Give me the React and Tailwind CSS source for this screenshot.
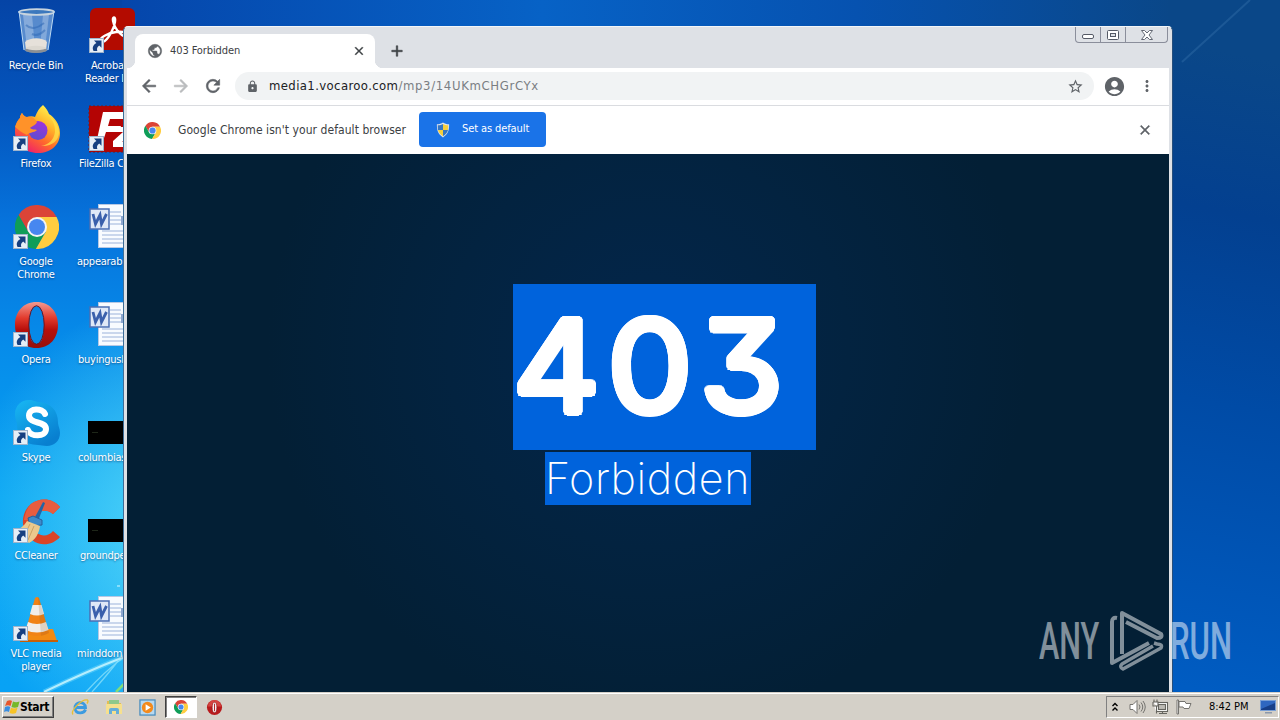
import React from "react";
import { MdPublic, MdLock, MdStarBorder, MdAccountCircle, MdMoreVert, MdArrowBack, MdArrowForward, MdRefresh, MdClose, MdAdd } from "react-icons/md";

// Little arrow badge in the corner of desktop shortcuts
const ShortcutBadge = () => (
  <svg viewBox="0 0 15 15" className="absolute left-[1px] bottom-[2px] w-[15px] h-[15px]">
    <rect x="0.5" y="0.5" width="14" height="14" fill="#e6eef6" stroke="#9fb4cc" />
    <path d="M5 2.500h7.500v7.200l-2.300-2.200C8 9 7.600 10.500 8.300 13H4.600C2.800 9.500 4.200 6.900 7.400 5z" fill="#163f80" />
  </svg>
);

const RecycleBin = () => (
  <svg viewBox="0 0 48 48" className="w-12 h-12">
    <path d="M7 4l5 39c5 4 19 4 24 0l6-39z" fill="#a9cdf0" fillOpacity="0.5" />
    <path d="M11 8l4 33h8L20 8z" fill="#fff" fillOpacity="0.28" />
    <path d="M37 8l-4 33h-5l3-33z" fill="#fff" fillOpacity="0.25" />
    <path d="M14 18c5 5 12 3 18-2M20 27c4 2 9 0 13-4" fill="none" stroke="#2b65b4" strokeWidth="2" opacity="0.5" />
    <path d="M13 35c5-5 18-5 22 0l-1 8c-5 3-15 3-20 0z" fill="#e6e1da" />
    <ellipse cx="24" cy="43" rx="11" ry="3" fill="#8b8f94" />
    <ellipse cx="24" cy="41" rx="10" ry="2.200" fill="#dcd8d0" />
    <ellipse cx="24.500" cy="5" rx="17.500" ry="2.800" fill="#3c78bd" stroke="#c8d4de" strokeWidth="1.800" />
    <path d="M7 4l5 39M42 4l-6 39" stroke="#bcd9f2" strokeWidth="1" />
  </svg>
);

const FirefoxIcon = () => (
  <svg viewBox="0 0 48 48" className="w-12 h-12">
    <defs>
      <linearGradient id="ffBody" x1="0.8" y1="0.05" x2="0.25" y2="0.95">
        <stop offset="0" stopColor="#fff44f" />
        <stop offset="0.35" stopColor="#ffb52a" />
        <stop offset="0.65" stopColor="#ff6a2b" />
        <stop offset="1" stopColor="#f0206a" />
      </linearGradient>
      <linearGradient id="ffGlobe" x1="0.7" y1="0" x2="0.3" y2="1">
        <stop offset="0" stopColor="#a032dc" />
        <stop offset="1" stopColor="#5a4fd0" />
      </linearGradient>
    </defs>
    <path d="M31 0c3 3 5 6 6 9 5 3 11 10 11 19 0 12-9 20-22 20S3 39 3 27c0-7 2-11 5-14 0-2 1-4 2-5 1 2 3 4 5 4 3-1 6-1 8 0 2-5 4-9 8-12z" fill="url(#ffBody)" />
    <circle cx="26" cy="25.500" r="9.500" fill="url(#ffGlobe)" />
    <path d="M3 22c2-6 4-8 5-9 0-2 1-4 2-5 1 2 3 4 5 4 4-1 7 0 10 5-1 3-5 4-7 6 2 2 5 1 7 2-3 3-8 2-10 5-5-2-8-5-12-8z" fill="#ff9229" />
    <path d="M31 1c2 8 13 13 12 26-1 8-7 13-14 14 10 1 18-5 18-14C47 16 35 11 31 1z" fill="#ffe14a" opacity="0.75" />
  </svg>
);

const ChromeLogo = ({ className }) => (
  <svg viewBox="2 2 44 44" className={className}>
    <path d="M24 14H43.600A22 22 0 0 0 5.540 12.030L15.340 29z" fill="#db4437" />
    <path d="M24 14H43.600A22 22 0 0 0 5.540 12.030L15.340 29z" fill="#0f9d58" transform="rotate(-120 24 24)" />
    <path d="M24 14H43.600A22 22 0 0 0 5.540 12.030L15.340 29z" fill="#ffcd40" transform="rotate(120 24 24)" />
    <circle cx="24" cy="24" r="10" fill="#f4f4f4" />
    <circle cx="24" cy="24" r="8" fill="#4787f0" />
  </svg>
);

const OperaIcon = ({ className }) => (
  <svg viewBox="0 0 48 48" className={className}>
    <defs>
      <linearGradient id="opRed" x1="0" y1="0" x2="0" y2="1">
        <stop offset="0" stopColor="#f29a90" />
        <stop offset="0.35" stopColor="#e23a2c" />
        <stop offset="0.6" stopColor="#b80f0b" />
        <stop offset="1" stopColor="#96100c" />
      </linearGradient>
    </defs>
    <path fillRule="evenodd" d="M24.500 1C38 1 46 11 46 24S38 47 24.500 47 3 37 3 24 11 1 24.500 1zM24.500 5C18.500 5 17 14 17 24s1.500 19 7.500 19S32 34 32 24 30.500 5 24.500 5z" fill="url(#opRed)" />
    <ellipse cx="24.500" cy="24" rx="7.700" ry="19.300" fill="none" stroke="#6d1420" strokeWidth="1" />
  </svg>
);

const SkypeIcon = () => (
  <svg viewBox="0 0 48 48" className="w-12 h-12">
    <defs>
      <linearGradient id="skBlue" x1="0" y1="0" x2="0.6" y2="1">
        <stop offset="0" stopColor="#18b8f4" />
        <stop offset="1" stopColor="#087fd0" />
      </linearGradient>
    </defs>
    <path d="M17 1c5 0 7 2 10 2 12 1 19 9 19 20 0 4 2 6 2 11 0 8-6 13-13 13-4 0-6-1-9-1C12 46 5 37 5 26c0-4-2-6-2-11C3 7 9 1 17 1z" fill="url(#skBlue)" />
    <path d="M33 15C30.500 9 17 8.500 17 16.500c0 9 17 5 17 13.500 0 8.500-16 8-18 1" fill="none" stroke="#fff" strokeWidth="6" strokeLinecap="round" />
  </svg>
);

const CCleanerIcon = () => (
  <svg viewBox="0 0 48 48" className="w-12 h-12">
    <path d="M48 10L41 17c-3-3-7-4-11-3-9 2-12 15-5 22 5 4 12 3 16-2l7 6c-7 8-19 10-28 3C8 34 8 16 19 7c9-7 22-6 29 3z" fill="#d94428" />
    <path d="M48 10L41 17c-3-3-7-4-11-3-5 1-8 6-8 10l-10-1c1-6 3-12 7-16 9-7 22-6 29 3z" fill="#e85c3f" />
    <path d="M31 5l2 1-7 18-4-2z" fill="#2364a6" />
    <path d="M16 21l5-2 9 4v5l-12 1z" fill="#3d8bcb" stroke="#285f9b" />
    <path d="M15 24l13 5c-1 8-5 14-11 17L2 34c6-2 10-5 13-10z" fill="#ecc98d" />
    <path d="M18 27l-6 12M22 29l-6 14" stroke="#cda263" strokeWidth="1" />
  </svg>
);

const VlcIcon = () => (
  <svg viewBox="0 0 48 48" className="w-12 h-12">
    <path d="M11 34h30l4 12H9z" fill="#f28a12" />
    <path d="M8 45h38v2H8z" fill="#c85f06" />
    <path d="M23 3q2-2 4 0l10 35q-12 6-24 0z" fill="#f18316" />
    <path d="M20.500 10h9l2.500 9q-7 3-14 0z" fill="#f1eeea" />
    <path d="M16 27q9 4 18 0l2.500 8q-11.500 5-23 0z" fill="#f1eeea" />
    <path d="M27 3l10 35q-4 2-8 3L26 2z" fill="#8a4b10" opacity="0.18" />
  </svg>
);

const AcrobatIcon = () => (
  <svg viewBox="0 0 48 48" className="w-12 h-12">
    <rect x="2" y="1" width="45" height="42" rx="6" fill="#b30b00" />
    <path d="M12 34c-1-3 8-8 16-9 8-1 12 1 11 4-2 3-12-5-14-15-1-5 3-5 2 1-1 7-7 18-12 20-1 0-2 0-3-1z" fill="none" stroke="#fff" strokeWidth="2.300" />
  </svg>
);

const FileZillaIcon = () => (
  <svg viewBox="0 0 48 48" className="w-12 h-12">
    <rect x="1" y="1" width="46" height="46" fill="#b40404" stroke="#7b1818" strokeDasharray="2 2" />
    <path d="M15 7h28l-2 7H22l-2 7h13l-2 6H18l-4 12H8z" fill="#fff" />
    <path d="M30 22h16v5L34 37h12v5H25v-6l10-9h-6z" fill="#fff" />
  </svg>
);

const WordDocIcon = () => (
  <svg viewBox="0 0 48 48" className="w-12 h-12">
    <rect x="10.500" y="1.500" width="36" height="43" fill="#f8fbff" stroke="#b6c8e4" />
    <path d="M22 9h11M22 13h11M22 17h11M22 21h11M14 28h30M14 32h30M14 36h30M14 40h30" stroke="#9bb2da" strokeWidth="1" />
    <rect x="33" y="13" width="10" height="9" fill="#8ea6cf" />
    <rect x="2" y="6" width="19" height="20" fill="#dfe8f7" stroke="#4b6fb4" strokeWidth="1.500" />
    <path d="M5 11l2.500 10L12 12l1.500 9L18.500 11" fill="none" stroke="#3a60ac" strokeWidth="2.800" />
  </svg>
);

const BlackThumb = () => (
  <svg viewBox="0 0 48 48" className="w-12 h-12">
    <rect y="22" width="48" height="23" fill="#000" />
    <path d="M4 33.500h6" stroke="#263020" strokeWidth="0.800" />
  </svg>
);

const leftIcons = [
  { id: "bin", icon: <RecycleBin />, lines: ["Recycle Bin"] },
  { id: "firefox", icon: <FirefoxIcon />, lines: ["Firefox"], shortcut: true },
  { id: "chrome", icon: <ChromeLogo className="w-11 h-11 ml-[3px] mt-[2px]" />, lines: ["Google", "Chrome"], shortcut: true },
  { id: "opera", icon: <OperaIcon className="w-12 h-12" />, lines: ["Opera"], shortcut: true },
  { id: "skype", icon: <SkypeIcon />, lines: ["Skype"], shortcut: true },
  { id: "ccleaner", icon: <CCleanerIcon />, lines: ["CCleaner"], shortcut: true },
  { id: "vlc", icon: <VlcIcon />, lines: ["VLC media", "player"], shortcut: true },
];

const rightIcons = [
  { id: "acrobat", icon: <AcrobatIcon />, lines: ["Acrobat", "Reader DC"], shortcut: true, pad: "pl-[10px]" },
  { id: "filezilla", icon: <FileZillaIcon />, lines: ["FileZilla C"], shortcut: true, pad: "pl-[4px]" },
  { id: "doc1", icon: <WordDocIcon />, lines: ["appearab"], pad: "pl-[2px]" },
  { id: "doc2", icon: <WordDocIcon />, lines: ["buyingusl"], pad: "pl-[3px]" },
  { id: "thumb1", icon: <BlackThumb />, lines: ["columbias"], pad: "pl-[3px]" },
  { id: "thumb2", icon: <BlackThumb />, lines: ["groundpe"], pad: "pl-[5px]" },
  { id: "doc3", icon: <WordDocIcon />, lines: ["minddoma"], pad: "pl-[2px]" },
];

const labelText =
  "font-['DejaVu_Sans_Condensed','DejaVu_Sans',sans-serif] text-[11px] leading-[13px] tracking-[-0.25px] text-white whitespace-nowrap [text-shadow:0_1px_2px_rgba(0,30,80,0.55)]";

const DesktopIcon = ({ item }) => (
  <div className="h-[98px] pt-[7px] flex flex-col items-center">
    <div className="relative w-12 h-12">
      {item.icon}
      {item.shortcut && <ShortcutBadge />}
    </div>
    <div className={`mt-[4px] w-full ${item.pad ? item.pad : "text-center"} ${labelText}`}>
      {item.lines.map((line, i) => (
        <div key={line} className={item.id === "acrobat" && i === 0 ? "pl-[6px]" : ""}>{line}</div>
      ))}
    </div>
  </div>
);

const Wallpaper = () => (
  <svg viewBox="0 0 1280 692" className="absolute inset-0 w-full h-full" preserveAspectRatio="none">
    <defs>
      <linearGradient id="wpLeft" x1="0" y1="0" x2="0" y2="1">
        <stop offset="0" stopColor="#0544a6" />
        <stop offset="0.16" stopColor="#0455bd" />
        <stop offset="0.32" stopColor="#0673dc" />
        <stop offset="0.5" stopColor="#068cea" />
        <stop offset="0.72" stopColor="#06a3f3" />
        <stop offset="1" stopColor="#08a2f5" />
      </linearGradient>
      <radialGradient id="wpGlow" gradientUnits="userSpaceOnUse" cx="200" cy="530" r="240">
        <stop offset="0" stopColor="#6ce6fa" stopOpacity="0.85" />
        <stop offset="1" stopColor="#6ce6fa" stopOpacity="0" />
      </radialGradient>
      <linearGradient id="wpTop" x1="0" y1="0" x2="1" y2="0">
        <stop offset="0" stopColor="#0546ab" />
        <stop offset="0.4" stopColor="#0762c6" />
        <stop offset="0.7" stopColor="#0652b0" />
        <stop offset="1" stopColor="#0a4788" />
      </linearGradient>
      <linearGradient id="wpRight" gradientUnits="userSpaceOnUse" x1="1270" y1="60" x2="1150" y2="680">
        <stop offset="0" stopColor="#0a4788" />
        <stop offset="0.25" stopColor="#034090" />
        <stop offset="0.55" stopColor="#004ba6" />
        <stop offset="1" stopColor="#005cc2" />
      </linearGradient>
    </defs>
    <rect width="700" height="692" fill="url(#wpLeft)" />
    <rect width="700" height="692" fill="url(#wpGlow)" />
    <rect x="122" width="1050" height="30" fill="url(#wpTop)" />
    <rect x="1168" width="112" height="692" fill="url(#wpRight)" />
    <path d="M1182 62L1250 0" stroke="#4a86bd" strokeWidth="2" opacity="0.28" />
    <path d="M44 692Q85 672 124 657" fill="none" stroke="#8fe9ff" strokeWidth="5" opacity="0.35" />
    <path d="M44 692Q85 672 124 657" fill="none" stroke="#c9f6ff" strokeWidth="2" opacity="0.85" />
    <path d="M86 692Q104 672 124 657M92 692Q108 674 118 661" fill="none" stroke="#a9eefb" strokeWidth="1.300" opacity="0.6" />
    <path d="M116 692l8-8" stroke="#9ae85c" strokeWidth="2.500" opacity="0.8" />
    <path d="M117 586h3" stroke="#d9faff" strokeWidth="1" />
  </svg>
);

const CaptionButtons = () => (
  <div className="absolute right-[4px] top-0 flex w-[93px] h-[16px] border border-t-0 border-[#8a8e9b] rounded-b-[4px]">
    <div className="w-[25px] border-r border-[#8a8e9b] flex items-center justify-center">
      <svg viewBox="0 0 12 5" className="w-[12px] h-[5px] mt-[4px]">
        <rect x="0.500" y="0.500" width="11" height="4" rx="1.500" fill="#fff" stroke="#555a66" />
      </svg>
    </div>
    <div className="w-[25px] border-r border-[#8a8e9b] flex items-center justify-center">
      <svg viewBox="0 0 12 10" className="w-[12px] h-[10px]">
        <rect x="0.500" y="0.500" width="11" height="9" rx="1" fill="#fff" stroke="#555a66" />
        <rect x="3.500" y="3.500" width="5" height="3" fill="#dee1e6" stroke="#555a66" />
      </svg>
    </div>
    <div className="grow flex items-center justify-center">
      <svg viewBox="0 0 12 10" className="w-[12px] h-[10px]">
        <path d="M0.500 0.500h3l2.500 2.500L8.500 0.500h3L8 5l3.500 4.500h-3L6 7 3.500 9.500h-3L4 5z" fill="#fff" stroke="#555a66" strokeWidth="0.900" />
      </svg>
    </div>
  </div>
);

const ShieldIcon = () => (
  <svg viewBox="0 0 16 18" className="w-[14px] h-[16px]">
    <path d="M8 0.500c2 1.500 4 2 7 2 0 7-1 11-7 15-6-4-7-8-7-15 3 0 5-0.500 7-2z" fill="#dfe3ea" />
    <path d="M8 2v7H2.300C2 7.500 2 5.500 2 3.700 4.500 3.600 6.500 3 8 2z" fill="#3577c4" />
    <path d="M8 2v7h5.700c0.300-1.500 0.300-3.500 0.300-5.300C11.500 3.600 9.500 3 8 2z" fill="#f6cf3d" />
    <path d="M8 9v7.200C4.500 13.800 3 11.800 2.300 9z" fill="#f6cf3d" />
    <path d="M8 9v7.200c3.500-2.400 5-4.400 5.700-7.200z" fill="#3577c4" />
  </svg>
);

const uiFont = "font-['DejaVu_Sans_Condensed','DejaVu_Sans',sans-serif]";
// slightly heavier icon outline, skipping the empty bounding path of the icon set
const bold = "stroke-current stroke-[0.7] [&_path[fill=none]]:stroke-none";

const BrowserWindow = () => (
  <div className="absolute left-[123px] top-[26px] w-[1050px] h-[666px] rounded-t-[5px] bg-[#dee1e6] border-l border-r border-l-[#3e6e98] border-r-[#274f7c] border-t border-t-[#f2f5f8] pl-[3px] pr-[3px] flex flex-col">
    <CaptionButtons />

    {/* Tab strip */}
    <div className="h-[41px] pt-[7px] pl-[8px] flex items-start shrink-0">
      <div className="relative w-[240px] h-[34px] bg-white rounded-t-[8px] flex items-center pl-[12px] pr-[9px]">
        <MdPublic className={`w-[16px] h-[16px] text-[#5f6368] ${bold}`} />
        <span className={`ml-[7px] text-[11px] text-[#3c4043] ${uiFont} tracking-[-0.1px]`}>403 Forbidden</span>
        <MdClose className={`ml-auto w-[14px] h-[14px] text-[#3c4043] ${bold}`} />
        <span className="absolute -left-[8px] bottom-0 w-[8px] h-[8px] bg-[radial-gradient(circle_at_0_0,#dee1e6_8px,white_8.5px)]" />
        <span className="absolute -right-[8px] bottom-0 w-[8px] h-[8px] bg-[radial-gradient(circle_at_100%_0,#dee1e6_8px,white_8.5px)]" />
      </div>
      <MdAdd className={`ml-[13px] mt-[8px] w-[18px] h-[18px] text-[#3c4043] ${bold}`} />
    </div>

    {/* Toolbar */}
    <div className="h-[38px] bg-white border-b border-[#dadce0] flex items-center shrink-0 pl-[12px] pb-[1px]">
      <MdArrowBack className={`w-[20px] h-[20px] text-[#5f6368] ${bold}`} />
      <MdArrowForward className={`ml-[12px] w-[20px] h-[20px] text-[#babcbe] ${bold}`} />
      <MdRefresh className={`ml-[12px] w-[20px] h-[20px] text-[#5f6368] ${bold}`} />
      <div className="ml-[12px] w-[859px] h-[28px] rounded-full bg-[#f1f3f4] flex items-center pl-[11px] pr-[10px]">
        <MdLock className="w-[13px] h-[13px] text-[#5f6368]" />
        <span className={`ml-[10px] text-[13px] ${uiFont} text-[#202124] tracking-[0.38px] whitespace-nowrap`}>
          media1.vocaroo.com<span className="text-[#7a7e83] tracking-[0.65px]">/mp3/14UKmCHGrCYx</span>
        </span>
        <MdStarBorder className="ml-auto w-[17px] h-[17px] text-[#5f6368]" />
      </div>
      <MdAccountCircle className="ml-[9px] w-[23px] h-[23px] text-[#5f6368]" />
      <MdMoreVert className="ml-[12px] w-[18px] h-[18px] text-[#5f6368]" />
    </div>

    {/* Default browser bar */}
    <div className="h-[48px] bg-white flex items-center shrink-0 pl-[17px] pr-[16px]">
      <ChromeLogo className="w-[17px] h-[17px]" />
      <span className={`ml-[17px] w-[241px] text-[12px] ${uiFont} text-[#3c4043] tracking-[0.06px] whitespace-nowrap`}>
        Google Chrome isn't your default browser
      </span>
      <div className="w-[127px] h-[35px] -mt-[1px] rounded-[4px] bg-[#1a73e8] flex items-center pl-[17px]">
        <ShieldIcon />
        <span className={`ml-[12px] text-[11px] ${uiFont} text-white tracking-[-0.1px] whitespace-nowrap`}>Set as default</span>
      </div>
      <MdClose className={`ml-auto w-[16px] h-[16px] text-[#5f6368] ${bold}`} />
    </div>

    {/* Page */}
    <div className="grow bg-[radial-gradient(circle_at_50%_36%,#03264b_0px,#032340_200px,#031f35_380px)] flex flex-col items-start pt-[130px] overflow-hidden">
      {/* shadows in a ring thicken the digits and round off their corners */}
      <div className="ml-[386px] w-[303px] h-[166px] bg-[#0063dc] font-['Inter',sans-serif] font-normal text-[128px] leading-[164px] tracking-[7px] text-white [text-shadow:3.5px_0_0_#fff,-3.5px_0_0_#fff,0_3.5px_0_#fff,0_-3.5px_0_#fff,2.5px_2.5px_0_#fff,-2.5px_2.5px_0_#fff,2.5px_-2.5px_0_#fff,-2.5px_-2.5px_0_#fff,3.2px_1.3px_0_#fff,-3.2px_1.3px_0_#fff,3.2px_-1.3px_0_#fff,-3.2px_-1.3px_0_#fff,1.3px_3.2px_0_#fff,-1.3px_3.2px_0_#fff,1.3px_-3.2px_0_#fff,-1.3px_-3.2px_0_#fff] [font-feature-settings:'cv09'] whitespace-nowrap">
        <span className="inline-block origin-left scale-x-[1.052]">403</span>
      </div>
      <div className="ml-[418px] mt-[2px] w-[206px] h-[53px] bg-[#0063dc] font-['Inter',sans-serif] font-extralight text-[43px] leading-[53px] tracking-[0.6px] text-white whitespace-nowrap">
        Forbidden
      </div>
    </div>
  </div>
);

const Watermark = () => (
  <div className="absolute left-[1039px] top-[610px] flex items-center h-[62px] text-white opacity-50 font-['Roboto',sans-serif] font-medium text-[51px]">
    <div className="w-[64px] h-[62px] leading-[63px]">
      <span className="inline-block origin-left scale-x-[0.6]">ANY</span>
    </div>
    <svg viewBox="0 0 56 62" className="ml-[6px] w-[56px] h-[62px]" fill="none" stroke="currentColor" strokeWidth="4" strokeLinejoin="round">
      <path d="M13 44V3L52 24Q54 28 48 28L17 12" />
      <path d="M8 8Q3 7 3 12V53L40 33" />
      <path d="M45 33L48 34Q54 34 52 38L14 59Q10 57 13 54L44 36" strokeWidth="3.500" />
    </svg>
    <div className="ml-[5px] w-[64px] h-[62px] leading-[63px]">
      <span className="inline-block origin-left scale-x-[0.61]">RUN</span>
    </div>
  </div>
);

const WindowsFlag = () => (
  <svg viewBox="0 0 16 16" className="w-[16px] h-[16px]">
    <path d="M3 2c2-1 4-1 5 0L6.500 7C5 6 3 6 1 7z" fill="#e8562a" />
    <path d="M9 2.500c2 1 4 1 6.500 0L14 8c-2 1-4.500 1-6.500 0z" fill="#76b82a" />
    <path d="M1 8c2-1 4-1 5.200 0L5 13c-1.500-1-3.500-1-5 0z" fill="#3a8ee0" />
    <path d="M7 8.700c2 1 4 1 6.500 0L12 14c-2 1-4.500 1-6.500 0z" fill="#f7c325" />
  </svg>
);

const IeIcon = () => (
  <svg viewBox="0 0 18 18" className="w-[18px] h-[18px]">
    <path d="M14.500 11.500C13 16 5 16.500 4 10.500 3 4 14 2 14.500 9.500H5" fill="none" stroke="#3c9be0" strokeWidth="2.800" />
    <path d="M2 16.500C-1 13 11 0.500 16.500 2c0.800 0.500 0.500 2-0.500 3.500" fill="none" stroke="#e9bf35" strokeWidth="1.400" />
  </svg>
);

const ExplorerIcon = () => (
  <svg viewBox="0 0 18 18" className="w-[18px] h-[18px]">
    <path d="M2 3h5l1 2h8v11H2z" fill="#e3bd55" />
    <rect x="4" y="2" width="10" height="6" fill="#8fc98b" />
    <path d="M1 6h16v10H1z" fill="#f6e08e" />
    <path d="M4 16v-4q0-2 2-2h6q2 0 2 2v4h-3v-3H7v3z" fill="#67add8" />
  </svg>
);

const MediaIcon = () => (
  <svg viewBox="0 0 18 18" className="w-[17px] h-[17px]">
    <rect x="1" y="1" width="16" height="16" fill="#b8d9f0" stroke="#478bbd" strokeWidth="1.300" />
    <circle cx="9" cy="9" r="6" fill="#f38a1c" />
    <path d="M7 5.500l5.500 3.500L7 12.500z" fill="#fff" />
  </svg>
);

const OperaSmall = () => (
  <svg viewBox="0 0 18 18" className="w-[17px] h-[17px]">
    <circle cx="9" cy="9" r="8" fill="#b81b1d" />
    <path d="M2 8a7 7 0 0 1 14 0z" fill="#e15550" opacity="0.7" />
    <ellipse cx="9" cy="9" rx="2.400" ry="5.500" fill="#fff" stroke="#7b0b0d" strokeWidth="0.600" />
    <path d="M9 5v8" stroke="#b3282a" strokeWidth="1.200" />
  </svg>
);

const Taskbar = () => (
  <div className="h-[28px] shrink-0 bg-[#d4d0c8] border-t border-[#d4d0c8] shadow-[inset_0_1px_0_#ffffff] flex items-center">
    <div className="ml-[2px] mt-[1px] w-[52px] h-[22px] border border-t-white border-l-white border-r-[#404040] border-b-[#404040] shadow-[inset_-1px_-1px_0_#808080] flex items-center pl-[1px]">
      <WindowsFlag />
      <span className="text-[12px] font-bold font-['DejaVu_Sans_Condensed','DejaVu_Sans',sans-serif] tracking-[-0.3px] text-black">Start</span>
    </div>
    <div className="ml-[11px] mt-[1px] flex items-center">
      <div className="w-[29px] flex justify-center"><IeIcon /></div>
      <div className="ml-[5px] w-[29px] flex justify-center"><ExplorerIcon /></div>
      <div className="ml-[5px] w-[29px] flex justify-center"><MediaIcon /></div>
      <div className="ml-[3px] w-[32px] h-[22px] bg-white border border-t-[#404040] border-l-[#404040] border-r-white border-b-white shadow-[inset_1px_1px_0_#808080] flex items-center justify-center">
        <ChromeLogo className="w-[14px] h-[14px]" />
      </div>
      <div className="ml-[3px] w-[29px] flex justify-center"><OperaSmall /></div>
    </div>
    <div className="ml-auto mr-[1px] mt-[1px] w-[173px] h-[22px] border border-t-[#808080] border-l-[#808080] border-r-white border-b-white flex items-center pl-[4px]">
      <svg viewBox="0 0 8 10" className="w-[8px] h-[10px]" fill="none" stroke="#000" strokeWidth="1.400">
        <path d="M1.500 4L4 1.500 6.500 4M1.500 8.500L4 6l2.500 2.500" />
      </svg>
      <svg viewBox="0 0 17 14" className="ml-[10px] w-[17px] h-[14px]" fill="#fff" stroke="#74736f" strokeWidth="1">
        <path d="M1 4.500h3l4-4v13l-4-4H1z" />
        <path d="M10 4.500q2 2.500 0 5M12 2.500q3.500 4.500 0 9M14 1q4.500 6 0 12" fill="none" />
      </svg>
      <svg viewBox="0 0 17 16" className="ml-[6px] w-[17px] h-[16px]" fill="#fff" stroke="#66655f" strokeWidth="1.100">
        <rect x="4.500" y="3.500" width="11" height="9" fill="#fff" />
        <rect x="6.500" y="5.500" width="7" height="5" fill="#bdbbb5" />
        <path d="M7 14.500h8M10.500 12v2.500" />
        <path d="M1 3h5v4H4.500v7.500M2 3V0.500M5 3V0.500M1 3v4h3.500" />
      </svg>
      <svg viewBox="0 0 16 16" className="ml-[7px] w-[16px] h-[16px]" fill="#fff" stroke="#74736f" strokeWidth="1">
        <path d="M1 1h1.500v14H1z" />
        <path d="M3 2.500h6l1 2h5l-2 5H8l-1-1.500H3z" />
      </svg>
      <span className={`ml-[17px] w-[40px] text-[11px] ${uiFont} text-black whitespace-nowrap tracking-[-0.05px]`}>8:42 PM</span>
      <svg viewBox="0 0 17 14" className="ml-[11px] w-[17px] h-[14px]">
        <rect x="0.500" y="0.500" width="15" height="10" fill="#2f67c0" stroke="#7a9fd4" />
        <path d="M1 9L15 3v7H1z" fill="#173f88" />
        <path d="M5 12h7v1.500H5z" fill="#8a98ac" />
      </svg>
    </div>
  </div>
);

function App() {
  return (
    <div className="w-[1280px] h-[720px] overflow-hidden flex flex-col bg-[#0455bd]">
      <div className="relative h-[692px] overflow-hidden">
        <Wallpaper />
        <div className="relative flex">
          <div className="w-[72px] flex flex-col">
            {leftIcons.map(item => <DesktopIcon key={item.id} item={item} />)}
          </div>
          <div className="ml-[3px] w-[73px] flex flex-col">
            {rightIcons.map(item => <DesktopIcon key={item.id} item={item} />)}
          </div>
        </div>
        <BrowserWindow />
        <Watermark />
      </div>
      <Taskbar />
    </div>
  );
}

export default App;
